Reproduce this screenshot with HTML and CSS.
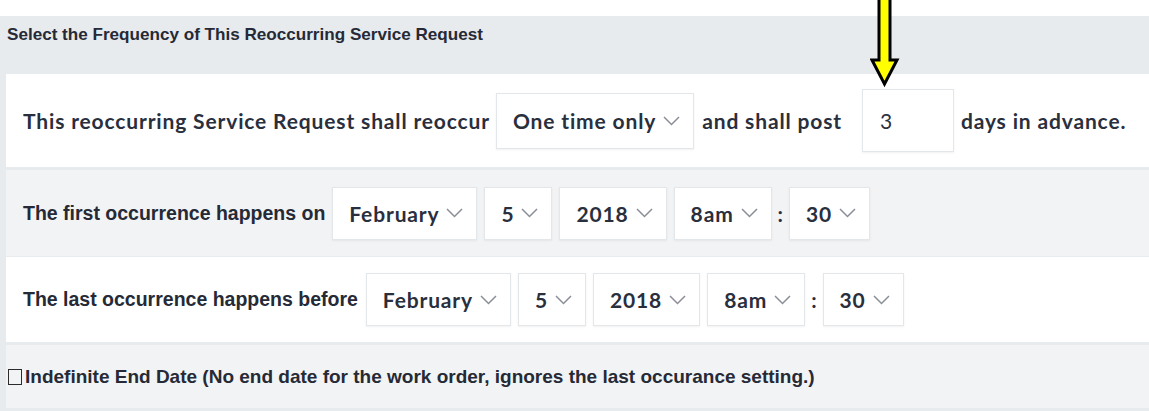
FILE: index.html
```html
<!DOCTYPE html>
<html>
<head>
<meta charset="utf-8">
<link rel="stylesheet" href="styles.css">
</head>
<body>
<div class="pointer">
  <svg width="30" height="90" viewBox="0 0 30 90">
    <polygon points="9,-3 20,-3 20,60 27,60 14.5,84 2,60 9,60" fill="#ffff00" stroke="#000" stroke-width="3" stroke-linejoin="miter"/>
  </svg>
</div>
<section class="panel">
  <h2 class="panel-title">Select the Frequency of This Reoccurring Service Request</h2>

  <div class="row row-white row-first">
    <span class="label-modern">This reoccurring Service Request shall reoccur</span>
    <div class="select select-tall gap-a">One time only<svg class="chev" width="17" height="10" viewBox="0 0 17 10"><polyline points="1,1 8.5,8.5 16,1" fill="none" stroke="#8a8e97" stroke-width="1.5"/></svg></div>
    <span class="label-modern gap-b">and shall post</span>
    <div class="input gap-c">3</div>
    <span class="label-modern gap-d">days in advance.</span>
  </div>

  <div class="row row-gray row-second">
    <span class="label-classic">The first occurrence happens on</span>
    <div class="selects">
      <div class="select">February<svg class="chev" width="17" height="10" viewBox="0 0 17 10"><polyline points="1,1 8.5,8.5 16,1" fill="none" stroke="#8a8e97" stroke-width="1.5"/></svg></div>
      <div class="select">5<svg class="chev" width="17" height="10" viewBox="0 0 17 10"><polyline points="1,1 8.5,8.5 16,1" fill="none" stroke="#8a8e97" stroke-width="1.5"/></svg></div>
      <div class="select">2018<svg class="chev" width="17" height="10" viewBox="0 0 17 10"><polyline points="1,1 8.5,8.5 16,1" fill="none" stroke="#8a8e97" stroke-width="1.5"/></svg></div>
      <div class="select">8am<svg class="chev" width="17" height="10" viewBox="0 0 17 10"><polyline points="1,1 8.5,8.5 16,1" fill="none" stroke="#8a8e97" stroke-width="1.5"/></svg></div>
      <span class="colon">:</span>
      <div class="select">30<svg class="chev" width="17" height="10" viewBox="0 0 17 10"><polyline points="1,1 8.5,8.5 16,1" fill="none" stroke="#8a8e97" stroke-width="1.5"/></svg></div>
    </div>
  </div>

  <div class="row row-white row-third">
    <span class="label-classic">The last occurrence happens before</span>
    <div class="selects selects-wide">
      <div class="select">February<svg class="chev" width="17" height="10" viewBox="0 0 17 10"><polyline points="1,1 8.5,8.5 16,1" fill="none" stroke="#8a8e97" stroke-width="1.5"/></svg></div>
      <div class="select">5<svg class="chev" width="17" height="10" viewBox="0 0 17 10"><polyline points="1,1 8.5,8.5 16,1" fill="none" stroke="#8a8e97" stroke-width="1.5"/></svg></div>
      <div class="select">2018<svg class="chev" width="17" height="10" viewBox="0 0 17 10"><polyline points="1,1 8.5,8.5 16,1" fill="none" stroke="#8a8e97" stroke-width="1.5"/></svg></div>
      <div class="select">8am<svg class="chev" width="17" height="10" viewBox="0 0 17 10"><polyline points="1,1 8.5,8.5 16,1" fill="none" stroke="#8a8e97" stroke-width="1.5"/></svg></div>
      <span class="colon">:</span>
      <div class="select">30<svg class="chev" width="17" height="10" viewBox="0 0 17 10"><polyline points="1,1 8.5,8.5 16,1" fill="none" stroke="#8a8e97" stroke-width="1.5"/></svg></div>
    </div>
  </div>

  <div class="row row-gray row-fourth">
    <span class="checkbox"></span>
    <span class="label-classic label-small">Indefinite End Date (No end date for the work order, ignores the last occurance setting.)</span>
  </div>
</section>
</body>
</html>
```

FILE: styles.css
```css
html, body {
  margin: 0;
  padding: 0;
  background: #ffffff;
}

body {
  color: #262b38;
  overflow: hidden;
}

.pointer {
  position: absolute;
  left: 870px;
  top: 0;
  width: 30px;
  height: 90px;
}

.pointer svg {
  display: block;
}

.panel {
  margin-top: 16px;
  background: #e8ebee;
  padding-left: 6px;
  padding-bottom: 3px;
}

.panel-title {
  margin: 0;
  height: 58px;
  padding: 9px 0 0 1px;
  box-sizing: border-box;
  font-family: "Liberation Sans", Arial, sans-serif;
  font-weight: 700;
  font-size: 17.1px;
  line-height: 20px;
  color: #252a36;
}

.row {
  display: flex;
  align-items: center;
  box-sizing: border-box;
  padding-left: 17px;
}

.row-white {
  background: #ffffff;
}

.row-gray {
  background: #f2f3f5;
}

.row-first {
  height: 93px;
  margin-bottom: 3px;
}

.row-second {
  height: 86px;
  margin-bottom: 1px;
}

.row-third {
  height: 85px;
  margin-bottom: 3px;
}

.row-fourth {
  height: 63px;
  padding-left: 2px;
}

.label-modern {
  font-family: Lato, "Open Sans", sans-serif;
  font-weight: 700;
  font-size: 21px;
  letter-spacing: 0.85px;
  color: #2a2f3d;
  white-space: nowrap;
}

.label-classic {
  font-family: "Liberation Sans", Arial, sans-serif;
  font-weight: 700;
  font-size: 19.5px;
  color: #252a36;
  white-space: nowrap;
}

.label-small {
  font-size: 19px;
}

.gap-a { margin-left: 6px; }
.gap-b { margin-left: 8px; }
.gap-c { margin-left: 20px; }
.gap-d { margin-left: 7px; }

.selects {
  display: flex;
  align-items: center;
  gap: 7px;
  margin-left: 7px;
}

.selects-wide {
  margin-left: 8px;
}

.select {
  display: flex;
  align-items: center;
  height: 53px;
  box-sizing: border-box;
  padding: 0 13px 0 16px;
  background: #ffffff;
  border: 1px solid #e4e7ea;
  box-shadow: 0 1px 2px rgba(0, 0, 0, 0.06);
  font-family: Lato, "Open Sans", sans-serif;
  font-weight: 700;
  font-size: 21px;
  letter-spacing: 0.85px;
  color: #2a2f3d;
  white-space: nowrap;
}

.select-tall {
  height: 56px;
}

.chev {
  display: block;
  margin-left: 7px;
}

.colon {
  font-family: Lato, "Open Sans", sans-serif;
  font-weight: 700;
  font-size: 21px;
  color: #2a2f3d;
  margin: 0 -1px;
}

.input {
  display: flex;
  align-items: center;
  width: 92px;
  height: 63px;
  box-sizing: border-box;
  padding-left: 17px;
  background: #ffffff;
  border: 1px solid #e4e7ea;
  box-shadow: 0 1px 2px rgba(0, 0, 0, 0.06);
  font-family: Lato, "Open Sans", sans-serif;
  font-weight: 400;
  font-size: 21px;
  color: #2a2f3d;
}

.checkbox {
  display: inline-block;
  width: 12px;
  height: 14px;
  border: 1px solid #2b2b2b;
  margin-right: 3px;
}
```
